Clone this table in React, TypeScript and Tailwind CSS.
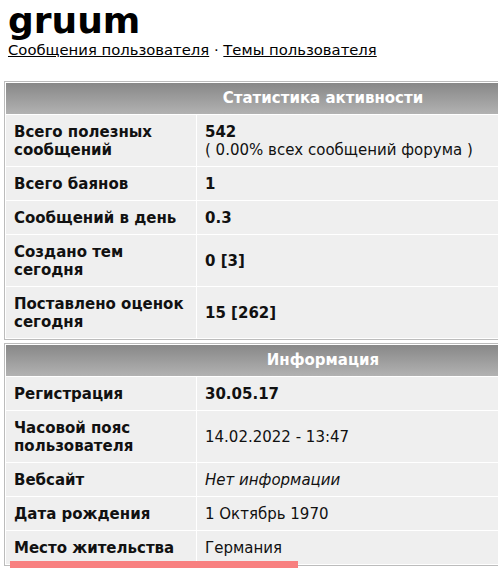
import React from 'react';

type Row = { label: string; value: React.ReactNode };

const stats: Row[] = [
  {
    label: 'Всего полезных сообщений',
    value: (
      <>
        <b>542</b>
        <br />( 0.00% всех сообщений форума )
      </>
    ),
  },
  { label: 'Всего баянов', value: <b>1</b> },
  { label: 'Сообщений в день', value: <b>0.3</b> },
  { label: 'Создано тем сегодня', value: <b>0 [3]</b> },
  { label: 'Поставлено оценок сегодня', value: <b>15 [262]</b> },
];

const info: Row[] = [
  { label: 'Регистрация', value: <b>30.05.17</b> },
  { label: 'Часовой пояс пользователя', value: '14.02.2022 - 13:47' },
  { label: 'Вебсайт', value: <i>Нет информации</i> },
  { label: 'Дата рождения', value: '1 Октябрь 1970' },
  { label: 'Место жительства', value: 'Германия' },
];

function StatTable({ title, rows }: { title: string; rows: Row[] }) {
  return (
    <table className="w-[638px] border border-[#bcbcbc] border-separate border-spacing-[1px] bg-white">
      <tbody>
        <tr>
          <th
            colSpan={2}
            className="h-[31px] bg-gradient-to-b from-[#888888] to-[#b2b2b2] text-center font-bold text-white text-[15px]"
          >
            {title}
          </th>
        </tr>
        {rows.map((r) => (
          <tr key={r.label}>
            <td className="w-[190px] bg-[#efefef] px-2 pt-2 pb-[7px] align-middle font-bold leading-[18px] text-[#111]">
              {r.label}
            </td>
            <td className="bg-[#efefef] px-2 pt-2 pb-[7px] align-middle leading-[18px] text-[#111]">
              {r.value}
            </td>
          </tr>
        ))}
      </tbody>
    </table>
  );
}

export default function App() {
  return (
    <div
      className="relative w-[498px] h-[572px] overflow-hidden bg-white text-[15px] text-black"
      style={{ fontFamily: '"DejaVu Sans", Verdana, sans-serif' }}
    >
      <div className="px-2 pt-[1px]">
        <h1 className="text-[36px] font-bold leading-[40px]">gruum</h1>
        <div className="leading-[18px] text-[14.8px]">
          <a className="underline">Сообщения пользователя</a> · <a className="underline">Темы пользователя</a>
        </div>
      </div>
      <div className="mt-[22px] ml-1 flex flex-col gap-[3px]">
        <StatTable title="Статистика активности" rows={stats} />
        <StatTable title="Информация" rows={info} />
      </div>
      <div className="absolute left-[10px] top-[561px] h-[7px] w-[288px] bg-[#f88080]" />
    </div>
  );
}
